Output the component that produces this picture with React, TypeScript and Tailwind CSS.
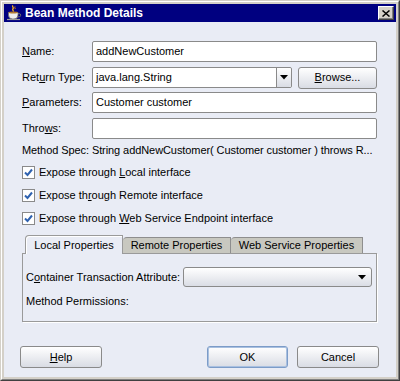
import React from "react";

function U({ children }: { children: React.ReactNode }) {
  return <span className="underline underline-offset-[1px]">{children}</span>;
}

function Field({ value }: { value?: string }) {
  return (
    <div className="flex h-[21px] flex-1 items-center rounded-[2px] border border-[#8a8a8a] bg-white pl-[3px] text-black">
      {value}
    </div>
  );
}

function Arrow() {
  return (
    <svg width="8" height="5" viewBox="0 0 8 5">
      <path d="M0 0h8L4 4.5z" fill="#000" />
    </svg>
  );
}

function Button({ children, w, primary }: { children: React.ReactNode; w: string; primary?: boolean }) {
  return (
    <div
      className={`flex h-[22px] ${w} items-center justify-center rounded-[3px] border bg-linear-to-b from-[#ffffff] to-[#d9dce4] ${
        primary ? "border-[#7c9cc8] shadow-[inset_0_0_0_1px_#a9c0e0]" : "border-[#8a8a8a]"
      }`}
    >
      {children}
    </div>
  );
}

function Check({ children }: { children: React.ReactNode }) {
  return (
    <div className="flex h-[23px] items-center gap-[4px]">
      <div className="flex h-[13px] w-[13px] items-center justify-center border border-[#8a8a8a] bg-white">
        <svg width="11" height="11" viewBox="0 0 11 11">
          <path d="M2 5.5l2.5 2.5L9 2.5" stroke="#2f62b0" strokeWidth="2" fill="none" />
        </svg>
      </div>
      <span>{children}</span>
    </div>
  );
}

export default function App() {
  return (
    <div className="h-[381px] w-[400px] border border-t-[#d4d0c8] border-l-[#d4d0c8] border-b-[#404040] border-r-[#404040] bg-[#d4d0c8] font-['Liberation_Sans',Arial,sans-serif] text-[11px] text-black">
      <div className="flex h-full flex-col border border-t-white border-l-white border-b-[#808080] border-r-[#808080] p-[2px]">
        {/* Title bar */}
        <div className="flex h-[18px] items-center bg-[#000080] pl-[2px] pr-[2px]">
          <svg width="16" height="16" viewBox="0 0 16 16">
            <path d="M7 0.5c-1.5 1.2 1.2 2 0 3.3s1 2 0 2.7" stroke="#f2b01e" strokeWidth="1.3" fill="none" />
            <path d="M9 1.5c-1 1 0.8 1.6 0 2.6" stroke="#e08a10" strokeWidth="1" fill="none" />
            <path d="M2.5 7.5h9.5v2.5a4 4 0 0 1-4 4h-1.5a4 4 0 0 1-4-4z" fill="#eeeeee" stroke="#6c6c6c" strokeWidth="0.8" />
            <path d="M12 8.6h1.1a1.6 1.6 0 0 1 0 3.2H11.6" fill="none" stroke="#6c6c6c" strokeWidth="1" />
            <ellipse cx="7.2" cy="7.6" rx="4.6" ry="1" fill="#b07830" />
            <path d="M1 14.5h13" stroke="#9a9a9a" strokeWidth="1.2" />
          </svg>
          <span className="ml-[3px] text-[12px] font-bold text-white">Bean Method Details</span>
          <div className="ml-auto flex h-[14px] w-[16px] items-center justify-center border border-t-white border-l-white border-b-[#404040] border-r-[#404040] bg-[#d4d0c8] shadow-[inset_-1px_-1px_0_#808080]">
            <svg width="8" height="7" viewBox="0 0 8 7">
              <path d="M0.5 0.5l7 6M7.5 0.5l-7 6" stroke="#000" strokeWidth="1.5" />
            </svg>
          </div>
        </div>

        {/* Body */}
        <div className="flex flex-1 flex-col bg-[#e9ecf5] pl-[18px] pr-[19px] pt-[19px]">
          <div className="flex h-[21px] items-center">
            <span className="w-[70px]">
              <U>N</U>ame:
            </span>
            <Field value="addNewCustomer" />
          </div>
          <div className="mt-[5px] flex h-[21px] items-center">
            <span className="w-[70px]">
              Ret<U>u</U>rn Type:
            </span>
            <div className="flex h-[21px] w-[200px] rounded-[2px] border border-[#8a8a8a] bg-white">
              <div className="flex flex-1 items-center pl-[3px]">java.lang.String</div>
              <div className="flex w-[15px] items-center justify-center rounded-r-[2px] border-l border-[#8a8a8a] bg-linear-to-b from-[#ffffff] to-[#d9dce4]">
                <Arrow />
              </div>
            </div>
            <div className="ml-[6px]">
              <Button w="w-[79px]">
                <span>
                  <U>B</U>rowse...
                </span>
              </Button>
            </div>
          </div>
          <div className="mt-[4px] flex h-[21px] items-center">
            <span className="w-[70px]">
              <U>P</U>arameters:
            </span>
            <Field value="Customer customer" />
          </div>
          <div className="mt-[5px] flex h-[21px] items-center">
            <span className="w-[70px]">
              Thro<U>w</U>s:
            </span>
            <Field />
          </div>
          <div className="flex h-[22px] items-center whitespace-pre tracking-[-0.08px]">
            Method Spec: String addNewCustomer( Customer customer ) throws R...
          </div>
          <Check>
            Expose through <U>L</U>ocal interface
          </Check>
          <Check>
            Expose th<U>r</U>ough Remote interface
          </Check>
          <Check>
            Expose through <U>W</U>eb Service Endpoint interface
          </Check>

          {/* Tabs */}
          <div className="mt-[5px] flex h-[18px] items-end pl-[3px]">
            <div className="relative z-10 -mb-px flex h-[19px] w-[98px] items-center justify-center rounded-tl-[4px] border border-b-0 border-[#9a9a9a] bg-[#e9ecf5] shadow-[inset_1px_1px_0_#ffffff]">
              Local Properties
            </div>
            <div className="flex h-[16px] w-[108px] items-center justify-center rounded-tl-[4px] border border-b-0 border-l-0 border-[#8e8e8e] bg-[#c8c8c0]">
              Remote Properties
            </div>
            <div className="flex h-[16px] w-[132px] items-center justify-center rounded-tl-[4px] border border-b-0 border-l-0 border-[#8e8e8e] bg-[#c8c8c0]">
              Web Service Properties
            </div>
          </div>
          <div className="flex h-[69px] flex-col border border-[#9a9a9a] pl-[3px] pr-[4px] pt-[13px] shadow-[1px_1px_0_#ffffff]">
            <div className="flex h-[20px] items-center">
              <span className="w-[157px]">
                C<U>o</U>ntainer Transaction Attribute:
              </span>
              <div className="flex h-[20px] flex-1 items-center justify-end rounded-[3px] border border-[#8a8a8a] bg-linear-to-b from-[#ffffff] to-[#dadde5] pr-[5px]">
                <Arrow />
              </div>
            </div>
            <div className="mt-[4px] flex h-[20px] items-center">Method Permissions:</div>
          </div>

          {/* Buttons */}
          <div className="-ml-[2px] -mr-[2px] mt-[24px] flex items-center">
            <Button w="w-[82px]">
              <span>
                <U>H</U>elp
              </span>
            </Button>
            <div className="ml-auto flex gap-[9px]">
              <Button w="w-[81px]" primary>
                OK
              </Button>
              <Button w="w-[82px]">Cancel</Button>
            </div>
          </div>
        </div>
      </div>
    </div>
  );
}
